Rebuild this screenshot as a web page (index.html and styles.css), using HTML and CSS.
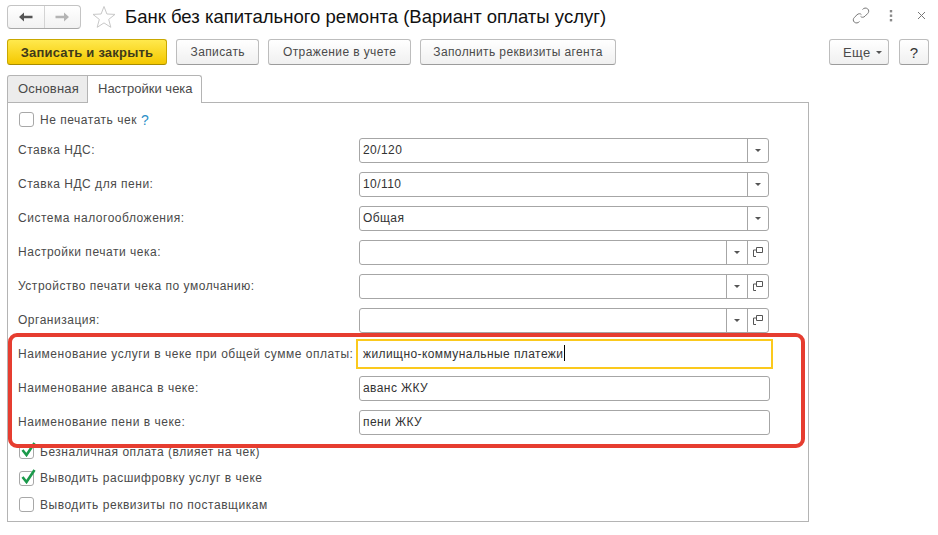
FILE: index.html
```html
<!DOCTYPE html>
<html lang="ru">
<head>
<meta charset="utf-8">
<title>Банк без капитального ремонта</title>
<link rel="stylesheet" href="styles.css">
</head>
<body>
<div class="page">
  <header class="head">
    <div class="nav">
      <button class="nav-btn"><svg width="16" height="12" viewBox="0 0 16 12"><path d="M1 6 L6 1.5 V4.7 H14.5 V7.3 H6 V10.5 Z" fill="#555"/></svg></button>
      <button class="nav-btn"><svg width="16" height="12" viewBox="0 0 16 12"><path d="M15 6 L10 1.5 V4.7 H1.5 V7.3 H10 V10.5 Z" fill="#b4b4b4"/></svg></button>
    </div>
    <svg class="star" width="24" height="24" viewBox="0 0 24 24"><path d="M12 1.5 L14.9 9 L23 9.4 L16.7 14.4 L18.8 22.3 L12 17.9 L5.2 22.3 L7.3 14.4 L1 9.4 L9.1 9 Z" fill="#fff" stroke="#c8c8c8"/></svg>
    <h1 class="title">Банк без капитального ремонта (Вариант оплаты услуг)</h1>
    <div class="win">
      <svg class="link" width="18" height="17" viewBox="0 0 18 17" fill="none" stroke="#777" stroke-width="1"><path d="M10.5 2.5 C12 .8 14 .6 15.6 1.8 C17.2 3.2 17 5.2 15.6 6.6 L13 9.2 C11.6 10.6 9.6 10.6 8.6 9.4"/><path d="M7.5 14.5 C6 16.2 4 16.4 2.4 15.2 C.8 13.8 1 11.8 2.4 10.4 L5 7.8 C6.4 6.4 8.4 6.4 9.4 7.6"/></svg>
      <svg class="dots" width="4" height="12" viewBox="0 0 4 12" fill="#8a8a8a"><rect x="0.8" y="0" width="2.4" height="2.4"/><rect x="0.8" y="4.5" width="2.4" height="2.4"/><rect x="0.8" y="9" width="2.4" height="2.4"/></svg>
      <svg width="9" height="9" viewBox="0 0 9 9" stroke="#777" stroke-width="1"><path d="M1 1 L8 8 M8 1 L1 8"/></svg>
    </div>
  </header>

  <div class="toolbar">
    <button class="btn primary">Записать и закрыть</button>
    <button class="btn">Записать</button>
    <button class="btn">Отражение в учете</button>
    <button class="btn tight">Заполнить реквизиты агента</button>
    <span class="spacer"></span>
    <button class="btn more">Еще <i class="caret"></i></button>
    <button class="btn help">?</button>
  </div>

  <div class="tabs">
    <div class="tab">Основная</div>
    <div class="tab active">Настройки чека</div>
  </div>

  <main class="panel">
    <label class="check first"><span class="box"></span>Не печатать чек <b class="q">?</b></label>

    <div class="row"><span class="lbl">Ставка НДС:</span>
      <div class="field"><span class="val">20/120</span><span class="cell"><i class="caret"></i></span></div></div>
    <div class="row"><span class="lbl">Ставка НДС для пени:</span>
      <div class="field"><span class="val">10/110</span><span class="cell"><i class="caret"></i></span></div></div>
    <div class="row"><span class="lbl">Система налогообложения:</span>
      <div class="field"><span class="val">Общая</span><span class="cell"><i class="caret"></i></span></div></div>
    <div class="row"><span class="lbl">Настройки печати чека:</span>
      <div class="field"><span class="val"></span><span class="cell"><i class="caret"></i></span><span class="cell"><svg width="10" height="10" viewBox="0 0 10 10" fill="none" stroke="#555"><path d="M3.5 .5 H9.5 V5.5 H3.5 Z"/><path d="M3.5 3 H.5 V9.5 H3"/></svg></span></div></div>
    <div class="row"><span class="lbl">Устройство печати чека по умолчанию:</span>
      <div class="field"><span class="val"></span><span class="cell"><i class="caret"></i></span><span class="cell"><svg width="10" height="10" viewBox="0 0 10 10" fill="none" stroke="#555"><path d="M3.5 .5 H9.5 V5.5 H3.5 Z"/><path d="M3.5 3 H.5 V9.5 H3"/></svg></span></div></div>
    <div class="row"><span class="lbl">Организация:</span>
      <div class="field"><span class="val"></span><span class="cell"><i class="caret"></i></span><span class="cell"><svg width="10" height="10" viewBox="0 0 10 10" fill="none" stroke="#555"><path d="M3.5 .5 H9.5 V5.5 H3.5 Z"/><path d="M3.5 3 H.5 V9.5 H3"/></svg></span></div></div>
    <div class="row"><span class="lbl">Наименование услуги в чеке при общей сумме оплаты:</span>
      <div class="field wide focus"><span class="val">жилищно-коммунальные платежи<i class="cursor"></i></span></div></div>
    <div class="row"><span class="lbl">Наименование аванса в чеке:</span>
      <div class="field wide"><span class="val">аванс ЖКУ</span></div></div>
    <div class="row"><span class="lbl">Наименование пени в чеке:</span>
      <div class="field wide"><span class="val">пени ЖКУ</span></div></div>

    <div class="checks">
      <label class="check"><span class="box"><svg class="tick" width="16" height="15" viewBox="0 0 16 15"><path d="M2.5 8 L6.5 13 L14.5 1" fill="none" stroke="#1b9a4b" stroke-width="2.6"/></svg></span>Безналичная оплата (влияет на чек)</label>
      <label class="check"><span class="box"><svg class="tick" width="16" height="15" viewBox="0 0 16 15"><path d="M2.5 8 L6.5 13 L14.5 1" fill="none" stroke="#1b9a4b" stroke-width="2.6"/></svg></span>Выводить расшифровку услуг в чеке</label>
      <label class="check"><span class="box"></span>Выводить реквизиты по поставщикам</label>
    </div>
  </main>
  <div class="highlight"></div>
</div>
</body>
</html>
```

FILE: styles.css
```css
* { box-sizing: border-box; }
html, body { margin: 0; padding: 0; background: #fff; }
body {
  font-family: "Liberation Sans", Arial, sans-serif;
  font-size: 12px;
  letter-spacing: .52px;
  color: #4a4a4a;
  width: 938px;
  height: 535px;
  overflow: hidden;
}
.page { position: relative; padding: 5px 9px 0 7px; height: 535px; }

.head { display: flex; align-items: center; height: 24px; }
.nav {
  display: flex; width: 74px; height: 24px;
  border: 1px solid #c4c4c4; border-bottom-color: #a8a8a8; border-radius: 4px;
  background: linear-gradient(#fff, #f2f2f2);
}
.nav-btn {
  flex: 1; padding: 0; border: 0; background: none;
  display: flex; align-items: center; justify-content: center;
}
.nav-btn + .nav-btn { border-left: 1px solid #d4d4d4; }
.star { margin-left: 11px; }
.title {
  margin: 0 0 0 9px; font-size: 18.55px; font-weight: 400; letter-spacing: 0; color: #111;
  line-height: 24px; white-space: nowrap;
}
.win { margin-left: auto; display: flex; align-items: center; gap: 19px; padding-right: 3px; margin-top: -3px; }
.dots { margin-right: 5px; }

.toolbar { display: flex; margin-top: 10px; height: 26px; gap: 9px; }
.btn {
  height: 26px; padding: 0 13.5px;
  font: inherit; letter-spacing: .4px; color: #4a4a4a;
  border: 1px solid #bdbdbd; border-bottom-color: #9c9c9c; border-radius: 3px;
  background: linear-gradient(#fff, #f0f0f0);
  display: flex; align-items: center;
}
.btn.tight { padding: 0 12.5px; letter-spacing: .38px; }
.btn.primary {
  width: 160px; padding: 0; justify-content: center; font-size: 13px; font-weight: 700; letter-spacing: .2px;
  color: #3f3a1a; border-color: #c9a800; border-bottom-color: #a88c00;
  background: linear-gradient(#ffe94d, #f4c800);
}
.spacer { flex: 1; }
.more { width: 60px; padding: 0 0 0 13px; gap: 5px; margin-right: 1px; font-size: 13px; }
.help { width: 30px; padding: 0; justify-content: center; font-size: 15px; color: #333; }
.caret {
  display: inline-block; width: 0; height: 0;
  border-left: 3px solid transparent; border-right: 3px solid transparent;
  border-top: 3px solid #555;
}

.tabs { display: flex; margin-top: 10px; height: 28px; position: relative; z-index: 1; }
.tab {
  height: 27px; padding: 0 10px; line-height: 25px; white-space: nowrap;
  border: 1px solid #b4b4b4; border-bottom: 0; border-radius: 3px 0 0 0;
  background: #ececec; font-size: 13px; letter-spacing: .2px;
  width: 81px;
}
.tab.active {
  width: 115px; height: 28px; background: #fff; border-left: 1px solid #b4b4b4; border-radius: 0 3px 0 0;
  padding-left: 10px; margin-left: -1px; letter-spacing: 0;
}

.panel {
  width: 802px; height: 420px; margin-top: -1px;
  border: 1px solid #b4b4b4; padding: 0 0 0 10px;
}
.check { display: flex; align-items: center; height: 15px; }
.check.first { margin-top: 9px; margin-bottom: 6px; }
.box {
  position: relative; flex: none;
  width: 15px; height: 15px; margin: 0 6px 0 1px;
  border: 1px solid #a8a8a8; border-radius: 3px; background: #fff;
}
.tick { position: absolute; left: 0; top: -3px; }
.q { margin-left: 4px; color: #2b8fc8; font-size: 14px; font-weight: 400; }

.row { display: flex; align-items: center; height: 34px; }
.lbl { width: 341px; flex: none; white-space: nowrap; }
.field {
  display: flex; width: 410px; height: 25px;
  border: 1px solid #a6a6a6; border-radius: 3px; background: #fff;
  color: #333; letter-spacing: .42px;
}
.field.wide { width: 411px; }
.field.focus { border: 2px solid #fbc91d; border-radius: 0; width: 417px; height: 30px; margin-left: -3px; padding-left: 3px; }
.val { flex: 1; padding-left: 3px; line-height: 23px; white-space: nowrap; }
.focus .val { padding-left: 2px; line-height: 26px; }
.cursor { display: inline-block; width: 1px; height: 16px; background: #000; vertical-align: -3px; margin-left: 1px; }
.cell {
  flex: none; width: 21px; border-left: 1px solid #a6a6a6;
  display: flex; align-items: center; justify-content: center;
}

.checks { display: flex; flex-direction: column; gap: 11.5px; margin-top: 0; padding-top: 5px; }

.highlight {
  position: absolute; left: 7.5px; top: 333px; width: 797px; height: 115px;
  border: 4.7px solid #e63d30; border-radius: 9px; pointer-events: none;
}
```
